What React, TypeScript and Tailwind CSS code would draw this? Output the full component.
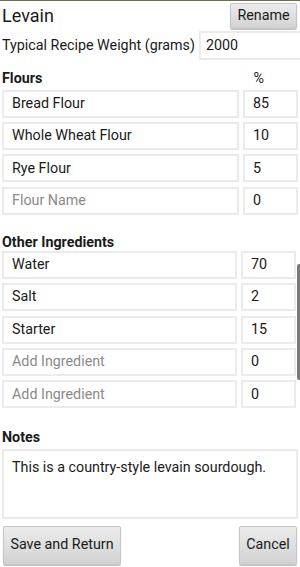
import React from "react";

const font = { fontFamily: "Roboto, 'Noto Sans', sans-serif" };

function Row({ name, pct, placeholder }: { name: string; pct: string; placeholder?: boolean }) {
  return (
    <div className="flex h-[32.4px] items-center gap-[4px] pl-[2px] pr-[2px]">
      <div className="flex h-[28px] flex-1 items-center border-2 border-[#ebebeb] pl-[8px]">
        <span className={`text-[14.3px] ${placeholder ? "text-[#8a8a8a]" : "text-[#1a1a1a]"}`}>{name}</span>
      </div>
      <div className="flex h-[28px] w-[55px] items-center border-2 border-[#ebebeb] pl-[8px]">
        <span className="text-[14.3px] text-[#1a1a1a]">{pct}</span>
      </div>
    </div>
  );
}

const btn =
  "flex items-center justify-center rounded-[2px] border border-[#c4c4c4] bg-gradient-to-b from-[#ececec] to-[#d2d2d2] text-[#1a1a1a] shadow-[0_1px_1px_rgba(0,0,0,0.25)]";

export default function App() {
  return (
    <div className="relative h-[567px] w-[300px] overflow-hidden bg-white" style={font}>
      <div className="h-[1px] bg-[#6e6e4e]" />
      <div className="flex h-[29px] items-center justify-between pl-[2px] pr-[3px]">
        <span className="text-[18px] text-[#1a1a1a]">Levain</span>
        <button className={`${btn} h-[26px] w-[67px] text-[14.3px]`}>Rename</button>
      </div>
      <div className="flex h-[31px] items-center justify-between pl-[2px]">
        <span className="whitespace-nowrap text-[14.3px] text-[#1a1a1a]">Typical Recipe Weight (grams)</span>
        <div className="flex h-[29px] w-[101px] items-center border-2 border-r-0 border-[#ebebeb] pl-[5px]">
          <span className="text-[14.3px] text-[#1a1a1a]">2000</span>
        </div>
      </div>
      <div className="flex h-[26.5px] items-end justify-between pl-[2px] pr-[36px]">
        <span className="text-[14.3px] font-bold leading-[19px] text-[#1a1a1a]">Flours</span>
        <span className="text-[14.3px] leading-[19px] text-[#1a1a1a]">%</span>
      </div>
      <Row name="Bread Flour" pct="85" />
      <Row name="Whole Wheat Flour" pct="10" />
      <Row name="Rye Flour" pct="5" />
      <Row name="Flour Name" pct="0" placeholder />
      <div className="flex h-[31.5px] items-end pl-[2px]">
        <span className="text-[14.3px] font-bold leading-[14px] text-[#1a1a1a]">Other Ingredients</span>
      </div>
      <div className="pr-[2px]">
        <Row name="Water" pct="70" />
        <Row name="Salt" pct="2" />
        <Row name="Starter" pct="15" />
        <Row name="Add Ingredient" pct="0" placeholder />
        <Row name="Add Ingredient" pct="0" placeholder />
      </div>
      <div className="flex h-[38px] items-end pl-[2px]">
        <span className="text-[14.3px] font-bold leading-[24px] text-[#1a1a1a]">Notes</span>
      </div>
      <div className="mx-[2px] h-[70px] border-2 border-[#ebebeb] px-[8px] pt-[4px]">
        <span className="text-[14.3px] text-[#1a1a1a]">This is a country-style levain sourdough.</span>
      </div>
      <div className="mt-[7px] flex justify-between pl-[3px] pr-[3px]">
        <button className={`${btn} h-[39px] w-[118px] text-[14.3px]`}>Save and Return</button>
        <button className={`${btn} h-[39px] w-[58px] text-[14.3px]`}>Cancel</button>
      </div>
      <div className="absolute left-[297px] top-[264px] h-[116px] w-[3px] rounded-l-[2px] bg-[#7a7a7a]" />
    </div>
  );
}
